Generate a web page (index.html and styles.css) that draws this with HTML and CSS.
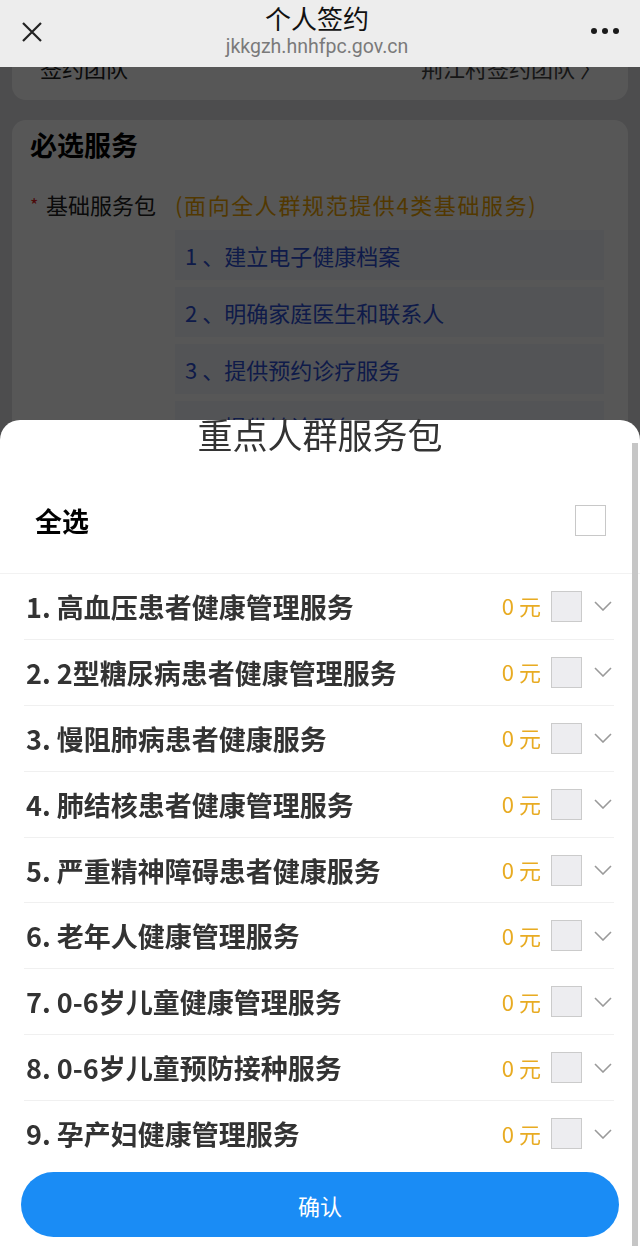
FILE: index.html
```html
<!DOCTYPE html>
<html>
<head>
    <meta charset="utf-8">
    <title>个人签约</title>
    <link rel="stylesheet" href="styles.css">
</head>
<body>
    <header class="navbar">
        <span class="nav-close">
            <svg width="22" height="22" viewBox="0 0 22 22"><path d="M2 2L20 20M20 2L2 20" stroke="#222" stroke-width="2.2" fill="none"/></svg>
        </span>
        <div class="nav-title">
            <div class="nav-name">个人签约</div>
            <div class="nav-url">jkkgzh.hnhfpc.gov.cn</div>
        </div>
        <span class="nav-more"><i></i><i></i><i></i></span>
    </header>

    <div class="page">
        <div class="card team">
            <span>签约团队</span>
            <span class="team-name">荆江村签约团队 〉</span>
        </div>
        <div class="card required">
            <h2>必选服务</h2>
            <div class="pkg-line">
                <span class="star">*</span>
                <span class="pkg-name">基础服务包</span>
                <span class="pkg-note">(面向全人群规范提供4类基础服务)</span>
            </div>
            <div class="pkg-items">
                <div class="pkg-item">1 、建立电子健康档案</div>
                <div class="pkg-item">2 、明确家庭医生和联系人</div>
                <div class="pkg-item">3 、提供预约诊疗服务</div>
                <div class="pkg-item">4 、提供转诊服务</div>
            </div>
        </div>
    </div>

    <!-- 弹层遮罩 -->
    <div class="mask"></div>

    <div class="sheet">
        <div class="sheet-title">重点人群服务包</div>
        <div class="select-all">
            <span>全选</span>
            <span class="check"></span>
        </div>
        <div class="service-list">
            <div class="service-row"><span class="service-name">1. 高血压患者健康管理服务</span><span class="price">0 元</span><span class="box"></span><svg class="arrow" width="18" height="10" viewBox="0 0 18 10"><path d="M1 1L9 9L17 1" stroke="#9a9a9a" stroke-width="1.6" fill="none"/></svg></div>
            <div class="service-row"><span class="service-name">2. 2型糖尿病患者健康管理服务</span><span class="price">0 元</span><span class="box"></span><svg class="arrow" width="18" height="10" viewBox="0 0 18 10"><path d="M1 1L9 9L17 1" stroke="#9a9a9a" stroke-width="1.6" fill="none"/></svg></div>
            <div class="service-row"><span class="service-name">3. 慢阻肺病患者健康服务</span><span class="price">0 元</span><span class="box"></span><svg class="arrow" width="18" height="10" viewBox="0 0 18 10"><path d="M1 1L9 9L17 1" stroke="#9a9a9a" stroke-width="1.6" fill="none"/></svg></div>
            <div class="service-row"><span class="service-name">4. 肺结核患者健康管理服务</span><span class="price">0 元</span><span class="box"></span><svg class="arrow" width="18" height="10" viewBox="0 0 18 10"><path d="M1 1L9 9L17 1" stroke="#9a9a9a" stroke-width="1.6" fill="none"/></svg></div>
            <div class="service-row"><span class="service-name">5. 严重精神障碍患者健康服务</span><span class="price">0 元</span><span class="box"></span><svg class="arrow" width="18" height="10" viewBox="0 0 18 10"><path d="M1 1L9 9L17 1" stroke="#9a9a9a" stroke-width="1.6" fill="none"/></svg></div>
            <div class="service-row"><span class="service-name">6. 老年人健康管理服务</span><span class="price">0 元</span><span class="box"></span><svg class="arrow" width="18" height="10" viewBox="0 0 18 10"><path d="M1 1L9 9L17 1" stroke="#9a9a9a" stroke-width="1.6" fill="none"/></svg></div>
            <div class="service-row"><span class="service-name">7. 0-6岁儿童健康管理服务</span><span class="price">0 元</span><span class="box"></span><svg class="arrow" width="18" height="10" viewBox="0 0 18 10"><path d="M1 1L9 9L17 1" stroke="#9a9a9a" stroke-width="1.6" fill="none"/></svg></div>
            <div class="service-row"><span class="service-name">8. 0-6岁儿童预防接种服务</span><span class="price">0 元</span><span class="box"></span><svg class="arrow" width="18" height="10" viewBox="0 0 18 10"><path d="M1 1L9 9L17 1" stroke="#9a9a9a" stroke-width="1.6" fill="none"/></svg></div>
            <div class="service-row last"><span class="service-name">9. 孕产妇健康管理服务</span><span class="price">0 元</span><span class="box"></span><svg class="arrow" width="18" height="10" viewBox="0 0 18 10"><path d="M1 1L9 9L17 1" stroke="#9a9a9a" stroke-width="1.6" fill="none"/></svg></div>
        </div>
        <button type="button" class="confirm">确认</button>
        <div class="scrollbar"></div>
    </div>
</body>
</html>
```

FILE: styles.css
```css
body {
    margin: 0;
    font-family: "Noto Sans CJK SC", "Noto Sans", sans-serif;
    background-color: #e0e0e4;
    color: #333;
    overflow: hidden;
    height: 1246px;
}
.navbar {
    position: fixed;
    top: 0;
    left: 0;
    right: 0;
    height: 67px;
    background-color: #ededed;
    display: flex;
    align-items: center;
    justify-content: space-between;
    padding: 0 21px;
    box-sizing: border-box;
    z-index: 20;
}
.nav-close {
    width: 22px;
    height: 22px;
    display: flex;
    margin-top: -3px;
}
.nav-title {
    text-align: center;
    margin-top: -4px;
}
.nav-name {
    font-size: 26px;
    line-height: 30px;
    color: #111;
}
.nav-url {
    font-family: Roboto, "Noto Sans", sans-serif;
    font-size: 19.5px;
    line-height: 28px;
    color: #7a7a7a;
}
.nav-more {
    display: flex;
    gap: 5px;
    margin-top: -5px;
}
.nav-more i {
    width: 6px;
    height: 6px;
    border-radius: 50%;
    background-color: #1a1a1a;
}
.page {
    padding: 17px 12px 0 12px;
}
.card {
    background-color: #fff;
    border-radius: 14px;
}
.team {
    height: 83px;
    display: flex;
    justify-content: space-between;
    align-items: flex-end;
    padding: 0 26px 17px 28px;
    box-sizing: border-box;
    font-size: 22px;
    color: #222;
}
.team-name {
    color: #444;
}
.required {
    margin-top: 20px;
    padding: 9px 24px 20px 18px;
    height: 900px;
}
.required h2 {
    margin: 0;
    font-size: 27px;
    line-height: 32px;
    color: #000;
}
.pkg-line {
    display: flex;
    align-items: center;
    margin-top: 28px;
    font-size: 22px;
    line-height: 30px;
}
.star {
    color: #e02020;
    width: 16px;
    font-size: 18px;
}
.pkg-name {
    color: #222;
    width: 129px;
}
.pkg-note {
    color: #f0a500;
    letter-spacing: 1.6px;
}
.pkg-items {
    margin-left: 145px;
    margin-top: 11px;
    display: flex;
    flex-direction: column;
    gap: 7px;
}
.pkg-item {
    height: 50px;
    line-height: 50px;
    padding-left: 10px;
    background-color: #f3f6fc;
    color: #2c4fd6;
    font-size: 22px;
}
.mask {
    position: fixed;
    top: 0;
    left: 0;
    right: 0;
    bottom: 0;
    background-color: rgba(0, 0, 0, 0.66);
    z-index: 10;
}
.sheet {
    position: fixed;
    left: 0;
    right: 0;
    bottom: 0;
    top: 420px;
    background-color: #fff;
    border-radius: 20px 20px 0 0;
    z-index: 30;
    display: flex;
    flex-direction: column;
}
.sheet-title {
    text-align: center;
    font-size: 35px;
    line-height: 28px;
    color: #333;
}
.select-all {
    margin-top: 20px;
    height: 105px;
    display: flex;
    align-items: center;
    justify-content: space-between;
    padding: 0 34px 0 35px;
    border-bottom: 1px solid #f2f2f2;
    font-size: 27px;
    font-weight: bold;
    color: #000;
}
.check {
    width: 29px;
    height: 29px;
    border: 1px solid #c8c8c8;
}
.service-list {
    padding: 0 26px 0 24px;
}
.service-row {
    height: 64.9px;
    display: flex;
    align-items: center;
    border-bottom: 1px solid #f0f0f0;
    padding: 0 2px;
}
.service-row.last {
    border-bottom: none;
}
.service-name {
    flex: 1;
    font-size: 27px;
    font-weight: bold;
    color: #333;
}
.price {
    font-size: 22px;
    color: #e8ab22;
    margin-right: 10px;
    margin-top: -2px;
}
.box {
    width: 29px;
    height: 29px;
    border: 1px solid #cbcbcb;
    background-color: #ededf0;
    margin-right: 12px;
}
.arrow {
    display: block;
}
.confirm {
    margin: 6px 21px 0 21px;
    height: 65px;
    border: none;
    border-radius: 33px;
    background-color: #1a8cf5;
    color: #fff;
    font-family: "Noto Sans CJK SC", sans-serif;
    font-size: 22px;
}
.scrollbar {
    position: absolute;
    top: 23px;
    bottom: 0;
    right: 2px;
    width: 6px;
    background-color: #c6c6c6;
}
```
